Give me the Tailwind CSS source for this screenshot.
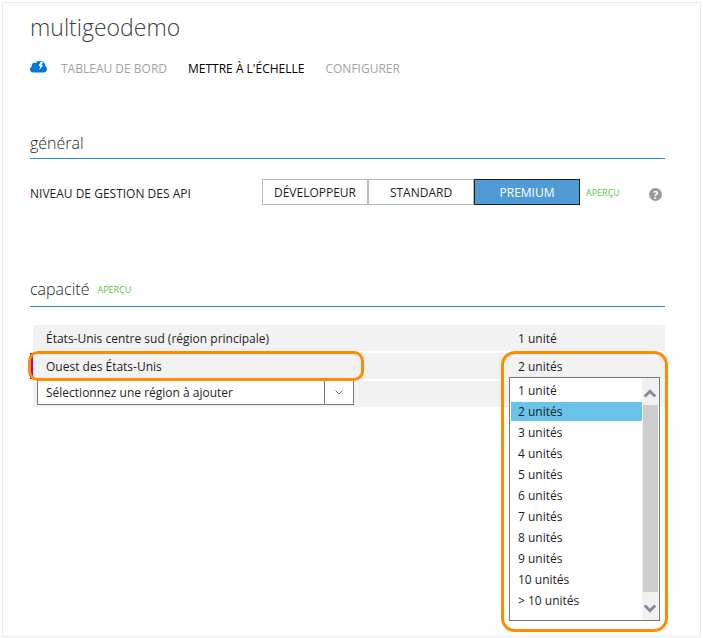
<!DOCTYPE html>
<html lang="fr">
<head>
<meta charset="utf-8">
<meta name="viewport" content="width=device-width, initial-scale=1">
<title>multigeodemo</title>
<script src="https://cdn.jsdelivr.net/npm/@tailwindcss/browser@4"></script>
</head>
<body class="bg-white p-0.5 font-['Open_Sans','Noto_Sans',sans-serif] text-xs text-[#1e1e1e]">
<div class="min-h-[calc(100vh-3px)] border border-[#ebebeb] pl-[27px] pr-[35px] pt-2">
  <header>
    <h1 class="text-[23px] leading-8 font-light text-[#404044]">multigeodemo</h1>
    <nav class="mt-4 flex h-5 items-center">
      <svg class="mr-3.5 mb-1 h-3 w-[17px]" viewBox="0 0 17 12" aria-hidden="true">
        <path fill="#0078d7" d="M3.500 11.500C1.400 11.500 0 10.200 0 8.400C0 6.900.8 5.800 1.900 5.400C1.500 3.200 2.600 1.800 4.400 1.700C5 1.700 5.400 1.800 5.800 2.100C6.400 .7 7.600 0 9 0H12.400C13.200 .4 13.700 1 13.900 1.700C14.900 2.300 15.400 3.500 15.100 4.900C16.300 5.500 17 6.700 17 8.100C17 10.200 15.600 11.500 13.600 11.500Z"/>
        <path fill="#fff" d="M10.800 .4L8.600 5H10.300L9.300 9L13.200 3.900H11.600L13.500.4Z"/>
      </svg>
      <a href="#" class="text-[#a3a3a7]">TABLEAU DE BORD</a>
      <a href="#" class="ml-[21px] text-black" aria-current="page">METTRE À L'ÉCHELLE</a>
      <a href="#" class="ml-[21px] text-[#a3a3a7]">CONFIGURER</a>
    </nav>
  </header>

  <section class="mt-[50px]">
    <h2 class="text-base leading-[29px] font-light text-[#1e1e1e]">général</h2>
    <div class="h-px bg-[#2b8ddd]"></div>
    <div class="mt-5 flex h-[26px] items-center">
      <span class="w-[232px] pt-1" id="tier">NIVEAU DE GESTION DES API</span>
      <div class="flex" role="group" aria-labelledby="tier">
        <button type="button" class="h-[26px] w-[106px] border border-[#bababa] pt-0.5">DÉVELOPPEUR</button>
        <button type="button" class="h-[26px] w-[106px] border border-[#bababa] pt-0.5">STANDARD</button>
        <button type="button" class="h-[26px] w-[106px] border border-[#1e1e1e] bg-[#4f9bd6] pt-0.5 text-white" aria-pressed="true">PREMIUM</button>
      </div>
      <span class="ml-1.5 pt-0.5 text-[9px] text-[#55c83c]">APERÇU</span>
      <button type="button" class="mt-1 mr-[3px] ml-auto flex size-[13px] items-center justify-center rounded-full bg-[#999] text-[11px] leading-none font-bold text-white" aria-label="Aide">?</button>
    </div>
  </section>

  <section class="mt-[71px]">
    <h2 class="flex h-[30px] items-start text-base leading-[26px] font-light text-[#1e1e1e]">capacité<span class="ml-2 text-[9px] leading-[27px] font-normal text-[#55c83c]">APERÇU</span></h2>
    <div class="h-px bg-[#2b8ddd]"></div>
    <div class="relative mt-[18px] ml-[3px]">
      <table class="w-full table-fixed border-separate border-spacing-0">
        <tbody>
          <tr class="h-7">
            <td class="border-b-2 border-white bg-[#f2f2f2] pt-0.5 pb-0 pl-[13px]">États-Unis centre sud (région principale)</td>
            <td class="w-[148px] border-b-2 border-white bg-[#f2f2f2] p-0 pt-0.5 pl-px">1 unité</td>
          </tr>
          <tr class="h-7">
            <td class="border-b-2 border-white bg-[#f2f2f2] pt-0.5 pb-0 pl-[13px]">Ouest des États-Unis</td>
            <td class="w-[148px] border-b-2 border-white bg-[#f2f2f2] p-0 pt-0.5 pl-px">2 unités</td>
          </tr>
          <tr class="h-[26px]">
            <td class="bg-[#f2f2f2] p-0 pl-1 align-top">
              <div class="relative -mt-px h-[25px] w-[317px]">
                <select aria-label="Ajouter une région" class="block h-full w-full appearance-none rounded-none border border-[#777] bg-white pl-2 text-xs">
                  <option>Sélectionnez une région à ajouter</option>
                </select>
                <span class="pointer-events-none absolute inset-y-0 right-0 flex w-[30px] items-center justify-center border border-[#777]">
                  <svg class="h-[5px] w-2" viewBox="0 0 8 5" fill="none" stroke="#777" aria-hidden="true"><path d="M.5 .5L4 4L7.500 .5"/></svg>
                </span>
              </div>
            </td>
            <td class="w-[148px] bg-[#f2f2f2] p-0"></td>
          </tr>
        </tbody>
      </table>

      <span class="absolute top-7 -left-[3px] h-[26px] w-[3px] bg-[#b4009e]"></span>
      <div class="pointer-events-none absolute top-[26px] -left-[5px] h-[30px] w-[336px] rounded-[10px] border-3 border-[#ff8c00]"></div>

      <div class="absolute top-[26px] -right-[3px] w-[167px] rounded-[14px] border-3 border-[#ff8c00] px-[5px] pt-[23px] pb-2">
        <div class="flex h-[244px] border border-[#777] bg-white pr-px">
          <select size="11" aria-label="Nombre d'unités" class="h-full min-w-0 flex-1 appearance-none overflow-hidden rounded-none border-0 bg-white p-0 pt-0.5 pl-px text-xs outline-none">
            <option class="h-[21px] min-h-0 p-0 pt-0.5 pl-[7px]">1 unité</option>
            <option selected class="h-[21px] min-h-0 border-y border-white bg-linear-to-r from-[#6ac3e9] to-[#6ac3e9] p-0 pt-px pl-[7px] text-[#1e1e1e]">2 unités</option>
            <option class="h-[21px] min-h-0 p-0 pt-0.5 pl-[7px]">3 unités</option>
            <option class="h-[21px] min-h-0 p-0 pt-0.5 pl-[7px]">4 unités</option>
            <option class="h-[21px] min-h-0 p-0 pt-0.5 pl-[7px]">5 unités</option>
            <option class="h-[21px] min-h-0 p-0 pt-0.5 pl-[7px]">6 unités</option>
            <option class="h-[21px] min-h-0 p-0 pt-0.5 pl-[7px]">7 unités</option>
            <option class="h-[21px] min-h-0 p-0 pt-0.5 pl-[7px]">8 unités</option>
            <option class="h-[21px] min-h-0 p-0 pt-0.5 pl-[7px]">9 unités</option>
            <option class="h-[21px] min-h-0 p-0 pt-0.5 pl-[7px]">10 unités</option>
            <option class="h-[21px] min-h-0 p-0 pt-0.5 pl-[7px]">&gt; 10 unités</option>
          </select>
          <div class="flex w-4 flex-col bg-[#f0f0f0]">
            <button type="button" aria-label="Défiler vers le haut" class="flex h-[27px] items-center justify-center pt-1">
              <svg class="h-[9px] w-3" viewBox="0 0 12 9" fill="none" stroke="#868999" stroke-width="3" aria-hidden="true"><path d="M.8 7.500L6 2.300L11.200 7.500"/></svg>
            </button>
            <div class="ml-px flex-1 bg-[#cdcdcd]"></div>
            <button type="button" aria-label="Défiler vers le bas" class="flex h-7 items-center justify-center pt-1">
              <svg class="h-[9px] w-3" viewBox="0 0 12 9" fill="none" stroke="#868999" stroke-width="3" aria-hidden="true"><path d="M.8 1.500L6 6.700L11.200 1.500"/></svg>
            </button>
          </div>
        </div>
      </div>
    </div>
  </section>
</div>
</body>
</html>
